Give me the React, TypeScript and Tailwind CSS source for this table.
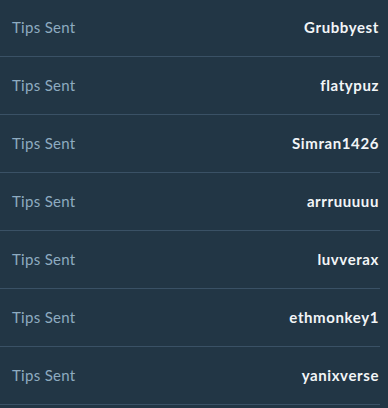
import React from "react";

const names = ["Grubbyest", "flatypuz", "Simran1426", "arrruuuuu", "luvverax", "ethmonkey1", "yanixverse"];

export default function App() {
  return (
    <div className="w-[388px] h-[408px] bg-[#223645] overflow-hidden" style={{ fontFamily: "Lato, 'Open Sans', sans-serif" }}>
      <div className="w-[380px] -mt-px">
        {names.map((n) => (
          <div key={n} className="h-[58px] flex items-center justify-between pl-3 pr-[1px] pb-[1px] border-b border-[#3a5165]">
            <span className="text-[15px] tracking-[0.3px] text-[#8eabc0]">Tips Sent</span>
            <span className="text-[15px] tracking-[0.6px] font-bold text-[#f2f5f7]">{n}</span>
          </div>
        ))}
      </div>
    </div>
  );
}
